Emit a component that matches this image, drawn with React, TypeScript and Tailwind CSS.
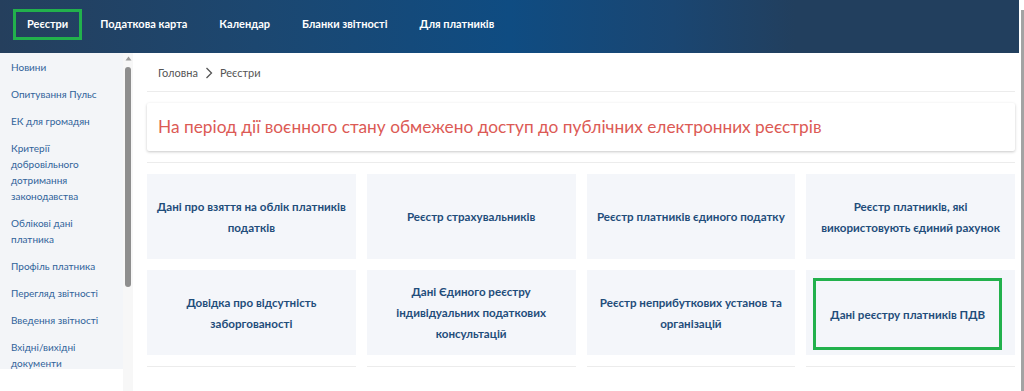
import React from "react";

const navItems = ["Реєстри", "Податкова карта", "Календар", "Бланки звітності", "Для платників"];

const sideItems: string[][] = [
  ["Новини"],
  ["Опитування Пульс"],
  ["ЕК для громадян"],
  ["Критерії", "добровільного", "дотримання", "законодавства"],
  ["Облікові дані", "платника"],
  ["Профіль платника"],
  ["Перегляд звітності"],
  ["Введення звітності"],
  ["Вхідні/вихідні", "документи"],
];

const tiles: { lines: string[]; boxed?: boolean }[] = [
  { lines: ["Дані про взяття на облік платників", "податків"] },
  { lines: ["Реєстр страхувальників"] },
  { lines: ["Реєстр платників єдиного податку"] },
  { lines: ["Реєстр платників, які", "використовують єдиний рахунок"] },
  { lines: ["Довідка про відсутність", "заборгованості"] },
  { lines: ["Дані Єдиного реєстру", "індивідуальних податкових", "консультацій"] },
  { lines: ["Реєстр неприбуткових установ та", "організацій"] },
  { lines: ["Дані реєстру платників ПДВ"], boxed: true },
];

export default function App() {
  return (
    <div
      className="w-[1024px] h-[391px] overflow-hidden bg-white flex"
      style={{ fontFamily: "Lato, 'Noto Sans', sans-serif" }}
    >
      <div className="w-[1019px] flex flex-col">
        {/* Header */}
        <header className="h-[53px] shrink-0 bg-[linear-gradient(90deg,#253f5d_0%,#1c4770_25%,#0f4c82_50%,#1a4672_66%,#223f5e_78%,#223f5e_100%)]">
          <nav className="flex items-center gap-[4px] pl-[13px] pt-[9px]">
            {navItems.map((n, i) => (
              <div
                key={n}
                className={`h-[31px] flex items-center px-[11px] border-[3px] text-[11px] font-bold text-white whitespace-nowrap ${
                  i === 0 ? "border-[#22b14c]" : "border-transparent"
                }`}
              >
                {n}
              </div>
            ))}
          </nav>
        </header>

        <div className="flex flex-1 min-h-0">
          {/* Sidebar */}
          <aside className="w-[123px] shrink-0 h-[316px] bg-[#f3f5f8] pl-[11px] pt-[6px] flex flex-col gap-[11px]">
            {sideItems.map((it, i) => (
              <div key={i} className="text-[10px] leading-[16px] text-[#30639a]">
                {it.map((l) => (
                  <div key={l} className="whitespace-nowrap">{l}</div>
                ))}
              </div>
            ))}
          </aside>

          {/* Sidebar scrollbar */}
          <div className="w-[10px] shrink-0 flex flex-col items-center bg-[#f7f7f7] pt-[2px]">
            <svg width="7" height="5" viewBox="0 0 7 5" className="mt-[1px]">
              <path d="M3.5 0.5 L6.5 4.5 L0.5 4.5 Z" fill="#9a9a9a" />
            </svg>
            <div className="w-[6px] h-[220px] mt-[6px] rounded-[3px] bg-[#8e8e8e]" />
          </div>

          {/* Main */}
          <main className="flex-1 pl-[14px] pr-[4px] pt-[12px]">
            <div className="flex items-center gap-[6px] pl-[11px] text-[11px] leading-[16px] text-[#555]">
              <span>Головна</span>
              <svg width="8" height="12" viewBox="0 0 8 12" className="mx-[1px]">
                <path d="M1.5 1 L6.5 6 L1.5 11" fill="none" stroke="#555" strokeWidth="1.3" />
              </svg>
              <span>Реєстри</span>
            </div>
            <div className="mt-[10px] h-px bg-[#ececec]" />
            <div className="mt-[11px] h-[48px] bg-white rounded-[2px] shadow-[0_1px_3px_rgba(0,0,0,0.22)] flex items-center pl-[11px]">
              <span className="text-[17.3px] text-[#dc5a55] whitespace-nowrap">
                На період дії воєнного стану обмежено доступ до публічних електронних реєстрів
              </span>
            </div>
            <div className="mt-[11px] h-px bg-[#ececec]" />
            <div className="mt-[11px] grid grid-cols-4 gap-[11px]">
              {tiles.map((t, i) =>
                t.boxed ? (
                  <div key={i} className="h-[85px] bg-[#f4f6fa] flex items-center pl-[7px]">
                    <div className="w-[189px] h-[72px] mt-[3px] border-[3px] border-[#22b14c] flex items-center justify-center text-center text-[11.6px] font-bold leading-[21px] text-[#1f4d7a]">
                      {t.lines[0]}
                    </div>
                  </div>
                ) : (
                  <div key={i} className="h-[85px] bg-[#f4f6fa] flex items-center justify-center">
                    <div className="text-center text-[11.6px] font-bold leading-[21px] text-[#1f4d7a]">
                      {t.lines.map((l) => (
                        <div key={l} className="whitespace-nowrap">{l}</div>
                      ))}
                    </div>
                  </div>
                )
              )}
              {[0, 1, 2, 3].map((k) => (
                <div key={"l" + k} className="h-px bg-[#ececec]" />
              ))}
            </div>
          </main>
        </div>
      </div>

      {/* Browser scrollbar */}
      <div className="w-[5px] flex flex-col items-end pt-[10px] bg-white">
        <div className="w-[3px] h-[381px] bg-[#a3a3a3]" />
      </div>
    </div>
  );
}
